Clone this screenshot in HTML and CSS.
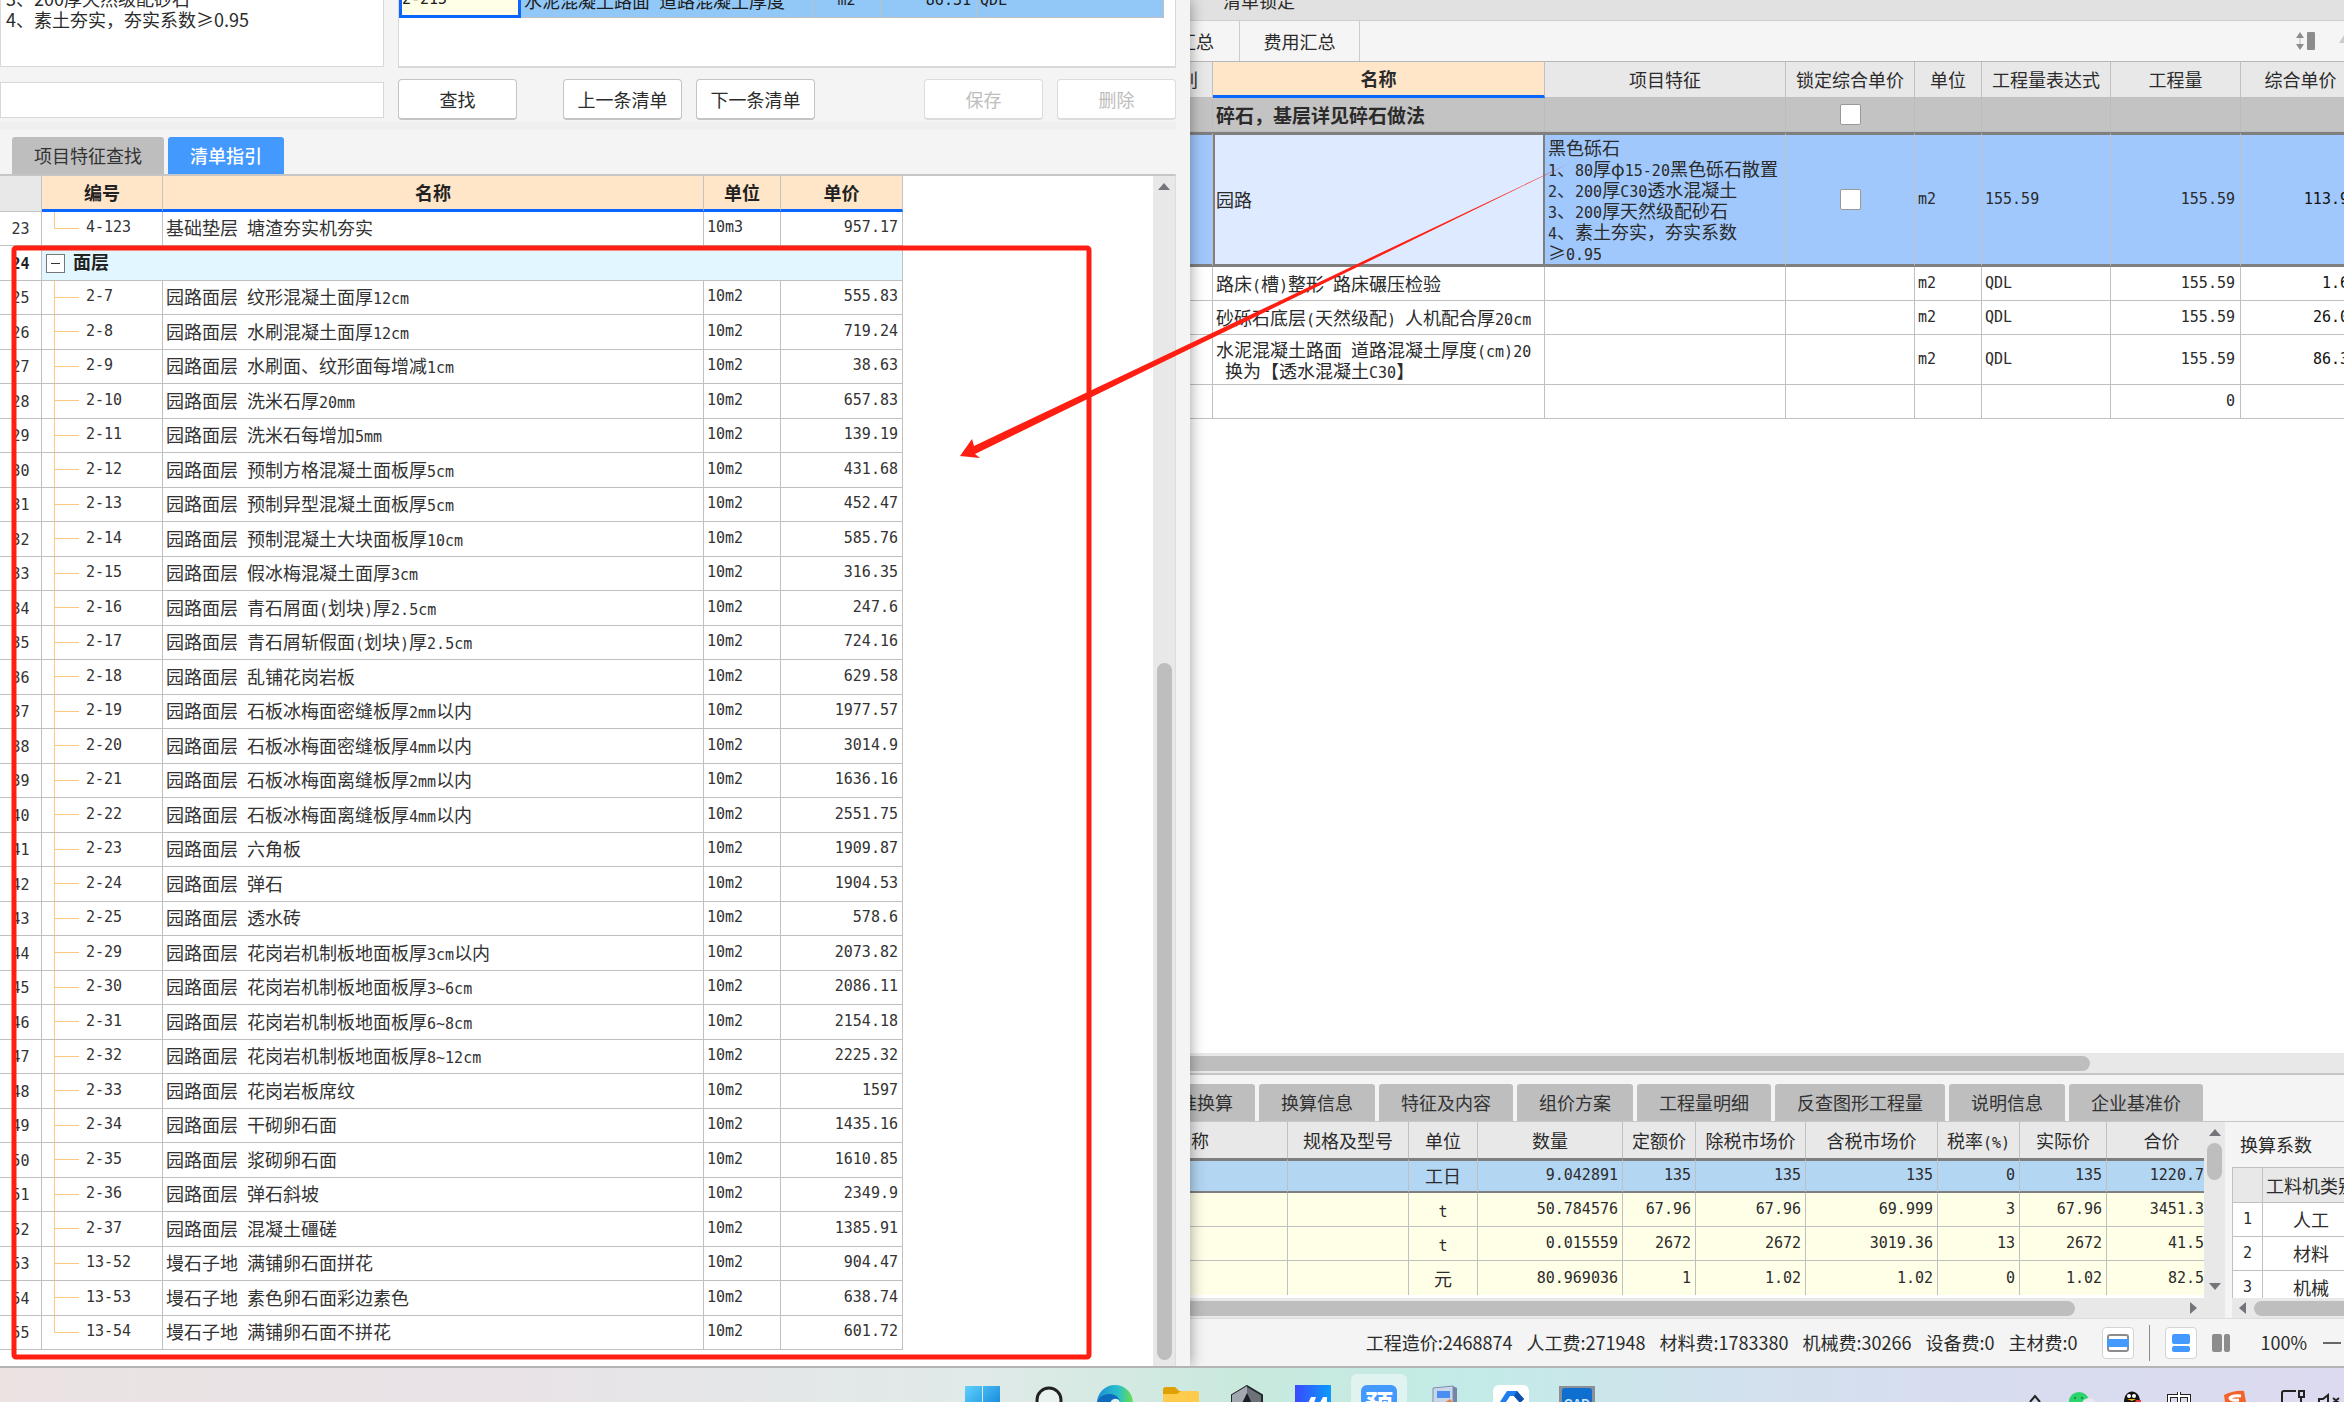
FILE: index.html
```html
<!DOCTYPE html>
<html lang="zh-CN">
<head>
<meta charset="utf-8">
<title>清单指引</title>
<link rel="stylesheet" href="styles.css">
</head>
<body>
<main class="desktop">
<section class="guide">
  <div class="guide-top">
    <textarea class="feature-box" aria-label="项目特征">3、200厚天然级配砂石
4、素土夯实，夯实系数≥0.95</textarea>
    <div class="quota-panel">
      <table class="quota">
        <colgroup><col class="w122"><col><col class="w68"><col class="w96"><col class="w187"></colgroup>
        <tr><td class="editing n">2-215</td><td>水泥混凝土路面<span class="n"> </span>道路混凝土厚度</td><td class="n mid">m2</td><td class="n num">86.31</td><td class="n">QDL</td></tr>
      </table>
    </div>
  </div>
  <div class="find-row">
    <input class="find-input" type="text" aria-label="查找内容">
    <button class="btn find">查找</button>
    <button class="btn">上一条清单</button>
    <button class="btn">下一条清单</button>
    <span class="grow"></span>
    <button class="btn" disabled>保存</button>
    <button class="btn" disabled>删除</button>
  </div>
  <div class="splitter"></div>
  <div class="tabs">
    <button class="tab">项目特征查找</button>
    <button class="tab active">清单指引</button>
  </div>
  <div class="list-area">
    <div class="list-scroll">
    <table class="list">
      <colgroup><col class="w42"><col class="w121"><col class="w541"><col class="w77"><col class="w122"></colgroup>
      <thead><tr><th class="corner"></th><th>编号</th><th>名称</th><th>单位</th><th>单价</th></tr></thead>
      <tbody>
      <tr><td>23</td><td class="last">4-123</td><td>基础垫层<span class="n"> </span>塘渣夯实机夯实</td><td>10m3</td><td>957.17</td></tr>
      <tr class="group"><td>24</td><td colspan="4"><button class="fold" aria-label="折叠"></button>面层</td></tr>
      <tr><td>25</td><td>2-7</td><td>园路面层<span class="n"> </span>纹形混凝土面厚<span class="n">12cm</span></td><td>10m2</td><td>555.83</td></tr>
      <tr><td>26</td><td>2-8</td><td>园路面层<span class="n"> </span>水刷混凝土面厚<span class="n">12cm</span></td><td>10m2</td><td>719.24</td></tr>
      <tr><td>27</td><td>2-9</td><td>园路面层<span class="n"> </span>水刷面、纹形面每增减<span class="n">1cm</span></td><td>10m2</td><td>38.63</td></tr>
      <tr><td>28</td><td>2-10</td><td>园路面层<span class="n"> </span>洗米石厚<span class="n">20mm</span></td><td>10m2</td><td>657.83</td></tr>
      <tr><td>29</td><td>2-11</td><td>园路面层<span class="n"> </span>洗米石每增加<span class="n">5mm</span></td><td>10m2</td><td>139.19</td></tr>
      <tr><td>30</td><td>2-12</td><td>园路面层<span class="n"> </span>预制方格混凝土面板厚<span class="n">5cm</span></td><td>10m2</td><td>431.68</td></tr>
      <tr><td>31</td><td>2-13</td><td>园路面层<span class="n"> </span>预制异型混凝土面板厚<span class="n">5cm</span></td><td>10m2</td><td>452.47</td></tr>
      <tr><td>32</td><td>2-14</td><td>园路面层<span class="n"> </span>预制混凝土大块面板厚<span class="n">10cm</span></td><td>10m2</td><td>585.76</td></tr>
      <tr><td>33</td><td>2-15</td><td>园路面层<span class="n"> </span>假冰梅混凝土面厚<span class="n">3cm</span></td><td>10m2</td><td>316.35</td></tr>
      <tr><td>34</td><td>2-16</td><td>园路面层<span class="n"> </span>青石屑面<span class="n">(</span>划块<span class="n">)</span>厚<span class="n">2.5cm</span></td><td>10m2</td><td>247.6</td></tr>
      <tr><td>35</td><td>2-17</td><td>园路面层<span class="n"> </span>青石屑斩假面<span class="n">(</span>划块<span class="n">)</span>厚<span class="n">2.5cm</span></td><td>10m2</td><td>724.16</td></tr>
      <tr><td>36</td><td>2-18</td><td>园路面层<span class="n"> </span>乱铺花岗岩板</td><td>10m2</td><td>629.58</td></tr>
      <tr><td>37</td><td>2-19</td><td>园路面层<span class="n"> </span>石板冰梅面密缝板厚<span class="n">2mm</span>以内</td><td>10m2</td><td>1977.57</td></tr>
      <tr><td>38</td><td>2-20</td><td>园路面层<span class="n"> </span>石板冰梅面密缝板厚<span class="n">4mm</span>以内</td><td>10m2</td><td>3014.9</td></tr>
      <tr><td>39</td><td>2-21</td><td>园路面层<span class="n"> </span>石板冰梅面离缝板厚<span class="n">2mm</span>以内</td><td>10m2</td><td>1636.16</td></tr>
      <tr><td>40</td><td>2-22</td><td>园路面层<span class="n"> </span>石板冰梅面离缝板厚<span class="n">4mm</span>以内</td><td>10m2</td><td>2551.75</td></tr>
      <tr><td>41</td><td>2-23</td><td>园路面层<span class="n"> </span>六角板</td><td>10m2</td><td>1909.87</td></tr>
      <tr><td>42</td><td>2-24</td><td>园路面层<span class="n"> </span>弹石</td><td>10m2</td><td>1904.53</td></tr>
      <tr><td>43</td><td>2-25</td><td>园路面层<span class="n"> </span>透水砖</td><td>10m2</td><td>578.6</td></tr>
      <tr><td>44</td><td>2-29</td><td>园路面层<span class="n"> </span>花岗岩机制板地面板厚<span class="n">3cm</span>以内</td><td>10m2</td><td>2073.82</td></tr>
      <tr><td>45</td><td>2-30</td><td>园路面层<span class="n"> </span>花岗岩机制板地面板厚<span class="n">3~6cm</span></td><td>10m2</td><td>2086.11</td></tr>
      <tr><td>46</td><td>2-31</td><td>园路面层<span class="n"> </span>花岗岩机制板地面板厚<span class="n">6~8cm</span></td><td>10m2</td><td>2154.18</td></tr>
      <tr><td>47</td><td>2-32</td><td>园路面层<span class="n"> </span>花岗岩机制板地面板厚<span class="n">8~12cm</span></td><td>10m2</td><td>2225.32</td></tr>
      <tr><td>48</td><td>2-33</td><td>园路面层<span class="n"> </span>花岗岩板席纹</td><td>10m2</td><td>1597</td></tr>
      <tr><td>49</td><td>2-34</td><td>园路面层<span class="n"> </span>干砌卵石面</td><td>10m2</td><td>1435.16</td></tr>
      <tr><td>50</td><td>2-35</td><td>园路面层<span class="n"> </span>浆砌卵石面</td><td>10m2</td><td>1610.85</td></tr>
      <tr><td>51</td><td>2-36</td><td>园路面层<span class="n"> </span>弹石斜坡</td><td>10m2</td><td>2349.9</td></tr>
      <tr><td>52</td><td>2-37</td><td>园路面层<span class="n"> </span>混凝土礓磋</td><td>10m2</td><td>1385.91</td></tr>
      <tr><td>53</td><td>13-52</td><td>墁石子地<span class="n"> </span>满铺卵石面拼花</td><td>10m2</td><td>904.47</td></tr>
      <tr><td>54</td><td>13-53</td><td>墁石子地<span class="n"> </span>素色卵石面彩边素色</td><td>10m2</td><td>638.74</td></tr>
      <tr><td>55</td><td class="last">13-54</td><td>墁石子地<span class="n"> </span>满铺卵石面不拼花</td><td>10m2</td><td>601.72</td></tr>
      </tbody>
    </table>
    </div>
    <div class="vbar"><svg width="12" height="7" viewBox="0 0 12 7"><path d="M0 7L6 0l6 7z" fill="#74747a"/></svg><div class="vthumb"></div></div>
  </div>
</section>

<section class="project">
 <div class="project-body">
  <header class="ribbon">清单锁定</header>
  <nav class="pages">
    <button class="page first">汇总</button>
    <button class="page">费用汇总</button>
    <span class="grow"></span>
    <svg width="48" height="18" viewBox="0 0 48 18"><g fill="#8c8c8c"><path d="M0 6l4-6 4 6zM0 12h8l-4 6z"/><path d="M3 6h2v6H3z" opacity=".3"/><rect x="11" width="8" height="18" rx="1"/></g><path d="M43 11l5-8v8z" fill="#ccc"/></svg>
  </nav>
  <div class="bill-area">
    <table class="bill">
      <colgroup><col class="w43"><col class="w332"><col class="w241"><col class="w129"><col class="w67"><col class="w129"><col class="w130"><col class="w120"></colgroup>
      <thead><tr><th class="cut">别</th><th class="current">名称</th><th>项目特征</th><th>锁定综合单价</th><th>单位</th><th>工程量表达式</th><th>工程量</th><th>综合单价</th></tr></thead>
      <tbody>
      <tr class="section"><td></td><td>碎石，基层详见碎石做法</td><td></td><td class="mid"><input type="checkbox" aria-label="锁定综合单价"></td><td></td><td></td><td></td><td></td></tr>
      <tr class="selected"><td></td><td class="focus">园路</td><td>黑色砾石<br><span class="n">1</span>、<span class="n">80</span>厚φ<span class="n">15-20</span>黑色砾石散置<br><span class="n">2</span>、<span class="n">200</span>厚<span class="n">C30</span>透水混凝土<br><span class="n">3</span>、<span class="n">200</span>厚天然级配砂石<br><span class="n">4</span>、素土夯实，夯实系数<br>≥<span class="n">0.95</span></td><td class="mid"><input type="checkbox" aria-label="锁定综合单价"></td><td class="n">m2</td><td class="n">155.59</td><td class="n num">155.59</td><td class="n num">113.9</td></tr>
      <tr><td></td><td>路床<span class="n">(</span>槽<span class="n">)</span>整形<span class="n"> </span>路床碾压检验</td><td></td><td></td><td class="n">m2</td><td class="n">QDL</td><td class="n num">155.59</td><td class="n num">1.6</td></tr>
      <tr><td></td><td>砂砾石底层<span class="n">(</span>天然级配<span class="n">) </span>人机配合厚<span class="n">20cm</span></td><td></td><td></td><td class="n">m2</td><td class="n">QDL</td><td class="n num">155.59</td><td class="n num">26.0</td></tr>
      <tr class="two"><td></td><td>水泥混凝土路面<span class="n"> </span>道路混凝土厚度<span class="n">(cm)20</span><br><span class="n keep"> </span>换为【透水混凝土<span class="n">C30</span>】</td><td></td><td></td><td class="n">m2</td><td class="n">QDL</td><td class="n num">155.59</td><td class="n num">86.3</td></tr>
      <tr><td></td><td></td><td></td><td></td><td></td><td></td><td class="n num">0</td><td></td></tr>
      </tbody>
    </table>
  </div>
  <div class="hbar main"><div class="hthumb"></div></div>
  <div class="tabs lower">
    <button class="tab first">准换算</button>
    <button class="tab">换算信息</button>
    <button class="tab">特征及内容</button>
    <button class="tab">组价方案</button>
    <button class="tab">工程量明细</button>
    <button class="tab wide">反查图形工程量</button>
    <button class="tab">说明信息</button>
    <button class="tab">企业基准价</button>
  </div>
  <div class="detail">
    <div class="res-area">
      <div class="res-clip">
      <table class="res">
        <colgroup><col><col class="w121"><col class="w69"><col class="w145"><col class="w73"><col class="w110"><col class="w132"><col class="w82"><col class="w87"><col class="w97"></colgroup>
        <thead><tr><th class="cut">名称</th><th>规格及型号</th><th>单位</th><th>数量</th><th>定额价</th><th>除税市场价</th><th>含税市场价</th><th>税率<span class="n">(%)</span></th><th>实际价</th><th>合价</th></tr></thead>
        <tbody>
        <tr class="selected"><td></td><td></td><td>工日</td><td>9.042891</td><td>135</td><td>135</td><td>135</td><td>0</td><td>135</td><td>1220.7</td></tr>
        <tr><td></td><td></td><td><span class="n">t</span></td><td>50.784576</td><td>67.96</td><td>67.96</td><td>69.999</td><td>3</td><td>67.96</td><td>3451.3</td></tr>
        <tr><td></td><td></td><td><span class="n">t</span></td><td>0.015559</td><td>2672</td><td>2672</td><td>3019.36</td><td>13</td><td>2672</td><td>41.5</td></tr>
        <tr><td></td><td></td><td>元</td><td>80.969036</td><td>1</td><td>1.02</td><td>1.02</td><td>0</td><td>1.02</td><td>82.5</td></tr>
        </tbody>
      </table>
      </div>
      <div class="hbar"><div class="hthumb"></div><span class="grow"></span><svg width="7" height="12" viewBox="0 0 7 12"><path d="M0 0l7 6-7 6z" fill="#74747a"/></svg></div>
    </div>
    <div class="res-vbar">
      <svg width="12" height="7" viewBox="0 0 12 7"><path d="M0 7L6 0l6 7z" fill="#74747a"/></svg>
      <div class="vthumb"></div>
      <span class="grow"></span>
      <svg width="12" height="7" viewBox="0 0 12 7"><path d="M0 0h12L6 7z" fill="#74747a"/></svg>
    </div>
    <aside class="coef">
      <h2>换算系数</h2>
      <div class="coef-clip">
      <table>
        <colgroup><col class="w31"><col class="w97"></colgroup>
        <tr><th></th><th>工料机类别</th></tr>
        <tr><td class="n">1</td><td>人工</td></tr>
        <tr><td class="n">2</td><td>材料</td></tr>
        <tr><td class="n">3</td><td>机械</td></tr>
      </table>
      </div>
      <div class="hbar"><svg width="7" height="12" viewBox="0 0 7 12"><path d="M7 0L0 6l7 6z" fill="#74747a"/></svg><div class="hthumb"></div></div>
    </aside>
  </div>
  <footer class="status">
    <div class="costs"><span>工程造价:2468874</span><span>人工费:271948</span><span>材料费:1783380</span><span>机械费:30266</span><span>设备费:0</span><span>主材费:0</span></div>
    <button class="view a" aria-label="单行显示"><svg width="22" height="18" viewBox="0 0 22 18"><rect x="1" y="1" width="20" height="16" rx="2" fill="#fff" stroke="#8c8c8c" stroke-width="2"/><path d="M0 5h22v8H0z" fill="#4499ff"/></svg></button>
    <i class="sep"></i>
    <button class="view" aria-label="上下布局"><svg width="18" height="18" viewBox="0 0 18 18"><rect width="18" height="10" rx="2" fill="#4499ff"/><rect y="12" width="18" height="6" rx="2" fill="#4499ff"/></svg></button>
    <button class="view plain" aria-label="左右布局"><svg width="18" height="18" viewBox="0 0 18 18"><rect width="10" height="18" rx="2" fill="#8c8c8c"/><rect x="12" width="6" height="18" rx="2" fill="#8c8c8c"/></svg></button>
    <span class="zoom">100%</span>
    <button class="minus" aria-label="缩小"></button>
  </footer>
 </div>
</section>

<svg class="marks" width="1600" height="1366" viewBox="0 0 1600 1366">
  <rect x="14" y="248" width="1075" height="1109" rx="2" fill="none" stroke="#ff1e12" stroke-width="5"/>
  <path d="M960 456L972 439L974 446L1570 163L975 454L980 458z" fill="#ff1e12"/>
</svg>
</main>

<footer class="taskbar">
  <span class="lead"></span>
  <div class="apps">
    <button aria-label="开始"><svg width="36" height="36" viewBox="0 0 36 36"><defs><linearGradient id="win" x2="1" y2="1"><stop stop-color="#5fd0fb"/><stop offset="1" stop-color="#0078d4"/></linearGradient></defs><path d="M0 1h17v16H0zM18 1h17v16H18zM0 18h17v17H0zM18 18h17v17H18z" fill="url(#win)"/></svg></button>
    <button aria-label="搜索"><svg width="36" height="36" viewBox="0 0 36 36"><circle cx="18" cy="15" r="12" fill="#e8f2ef" stroke="#222" stroke-width="3"/><path d="M26 24l8 9" stroke="#222" stroke-width="3"/></svg></button>
    <button aria-label="浏览器"><svg width="36" height="36" viewBox="0 0 36 36"><defs><linearGradient id="edge"><stop stop-color="#1a8fd8"/><stop offset=".6" stop-color="#2bc0c8"/><stop offset="1" stop-color="#6be04a"/></linearGradient></defs><circle cx="18" cy="18" r="18" fill="url(#edge)"/><path d="M0 18C2 7 20 6 23 16c1 3-1 4-2 6-3 5-11 10-14 10C3 29 0 24 0 18z" fill="#0f6cbd"/><path d="M13 20c0-8 10-8 10-2 0 2-2 3-1 5H14z" fill="#dff3ef"/></svg></button>
    <button aria-label="文件夹"><svg width="36" height="36" viewBox="0 0 36 36"><path d="M0 14V5q0-3 3-3h9l4 4h18v8z" fill="#e0a000"/><path d="M0 9h14l4-3h16q2 0 2 2v26H0z" fill="#ffcb4d"/></svg></button>
    <button aria-label="造价云"><svg width="36" height="36" viewBox="0 0 36 36"><path d="M18 1l15 9v18l-15 8-15-8V10z" fill="#6d7178" stroke="#24272c" stroke-width="2"/><path d="M18 1v8L7 28l-4-2V10z" fill="#a3a8b0"/><path d="M18 8l9 19H9z" fill="#1c1e22"/></svg></button>
    <button aria-label="办公"><svg width="36" height="36" viewBox="0 0 36 36"><defs><linearGradient id="of" x2="1"><stop stop-color="#3b49ff"/><stop offset="1" stop-color="#0a9cff"/></linearGradient></defs><path d="M0 0h36v36H0z" fill="url(#of)"/><path d="M8 29l8-17h5l-6 17zM19 29l9-17h4v17h-5V21l-4 8z" fill="#fff"/></svg></button>
    <button class="open" aria-label="预算"><span class="yu">预</span></button>
    <button aria-label="计算器"><svg width="36" height="36" viewBox="0 0 36 36"><path d="M6 3l20-2v34H6z" fill="#c9d6e8" stroke="#7e8fb0"/><path d="M26 1l4 2v32h-4z" fill="#7584a8"/><path d="M10 6h13v7H10z" fill="#4b8df0"/><path d="M10 17h5v3h-5zM10 22h5v3h-5z" fill="#6d87b5"/><path d="M17 18l6-4 4 5-3 1v6h-4z" fill="#e8824a"/></svg></button>
    <button aria-label="云助手"><svg width="36" height="36" viewBox="0 0 36 36"><rect width="36" height="36" rx="6" fill="#fff"/><path d="M5 20L14 6h10l7 8-4 4-6-7h-4l-6 9 6 9-4 4z" fill="#1f7df0"/><path d="M24 6l7 8-4 4-6-7z" fill="#0f4fae"/></svg></button>
    <button aria-label="CAD"><svg width="36" height="36" viewBox="0 0 36 36"><path d="M0 1h36v35H0z" fill="#8b8f96"/><rect x="3" y="3" width="30" height="33" rx="3" fill="#0f6fd0"/><text x="18" y="23" text-anchor="middle" class="cad">CAD</text></svg></button>
  </div>
  <span class="gap"></span>
  <div class="tray">
    <svg width="26" height="34" viewBox="0 0 26 34"><path d="M8 34l5-6 5 6" fill="none" stroke="#222" stroke-width="2"/></svg>
    <svg width="68" height="34" viewBox="0 0 68 34"><ellipse cx="31" cy="33" rx="10" ry="9" fill="#2bd46c"/><circle cx="27" cy="30" r="1" fill="#174"/><circle cx="34" cy="30" r="1" fill="#174"/><ellipse cx="41" cy="36" rx="7" ry="6" fill="#e8e8ee"/></svg>
    <svg width="32" height="34" viewBox="0 0 32 34"><path d="M8 34c0-14 16-14 16 0z" fill="#111"/><circle cx="13" cy="28" r="2" fill="#fff"/><circle cx="18" cy="28" r="2" fill="#fff"/><path d="M11 31h9l-4 2z" fill="#f5b400"/><path d="M20 32h5v2h-6z" fill="#e33"/></svg>
    <svg width="62" height="34" viewBox="0 0 62 34"><path d="M21 34v-6h20v6M31 24v10" fill="none" stroke="#222" stroke-width="4"/><path d="M21 34v-6h20v6M31 24v10" fill="none" stroke="#fff" stroke-width="2"/></svg>
    <svg width="50" height="34" viewBox="0 0 50 34"><path d="M14 27q11-5 20-4l2 11H15z" fill="#f4622c"/><path d="M31 28q-9-1-11 2 1 3 9 2" fill="none" stroke="#fff" stroke-width="3"/></svg>
    <svg width="56" height="34" viewBox="0 0 56 34"><path d="M36 23H24q-2 0-2 2v9M39 23h5v6h-5zM41 29v5" fill="none" stroke="#222" stroke-width="2"/></svg>
    <svg width="28" height="34" viewBox="0 0 28 34"><path d="M3 34v-3h4l5-4v7M17 30l6 5M23 30l-6 5" fill="none" stroke="#222" stroke-width="2"/></svg>
  </div>
</footer>
</body>
</html>
```
FILE: styles.css
```css
* { box-sizing: border-box; }
html, body { margin: 0; height: 100%; }
body {
  display: flex;
  flex-direction: column;
  height: 100vh;
  overflow: hidden;
  font: 18px/21px "Noto Sans CJK SC", sans-serif;
  color: #2b2b2b;
}
button, input, textarea { font: inherit; color: inherit; margin: 0; padding: 0; border: 0; }
table { border-collapse: separate; border-spacing: 0; table-layout: fixed; }
td, th { padding: 0; font-weight: 400; white-space: nowrap; overflow: hidden; }
svg { display: block; flex: none; }
.n { font-family: "DejaVu Sans Mono", monospace; font-size: 15px; }
span.n { line-height: 15px; }
.keep { white-space: pre; }
.grow { flex: 1; }
.mid { text-align: center; }
.num { text-align: right; }

.w31 { width: 31px; } .w42 { width: 42px; } .w43 { width: 43px; } .w67 { width: 67px; }
.w68 { width: 68px; } .w69 { width: 69px; } .w73 { width: 73px; } .w77 { width: 77px; }
.w82 { width: 82px; } .w87 { width: 87px; } .w96 { width: 96px; } .w97 { width: 97px; }
.w110 { width: 110px; } .w120 { width: 120px; } .w121 { width: 121px; } .w122 { width: 122px; }
.w129 { width: 129px; } .w130 { width: 130px; } .w132 { width: 132px; } .w145 { width: 145px; }
.w187 { width: 187px; } .w241 { width: 241px; } .w332 { width: 332px; } .w541 { width: 541px; }

.desktop {
  position: relative;
  flex: 1;
  min-height: 0;
  display: grid;
  grid-template-columns: 595fr 577fr;
  border-bottom: 2px solid #b2b4b6;
  overflow: hidden;
}
.marks { position: absolute; left: 0; top: 0; z-index: 3; pointer-events: none; }

/* guide window */
.guide {
  position: relative;
  z-index: 2;
  min-width: 0;
  min-height: 0;
  display: flex;
  flex-direction: column;
  padding-right: 14px;
  background: #f4f4f4;
  box-shadow: 0 0 14px rgba(0, 0, 0, .4);
}
.guide-top { display: flex; gap: 14px; height: 68px; overflow: hidden; }
.feature-box {
  width: 384px;
  height: 80px;
  margin-top: -13px;
  padding-left: 5px;
  border: 1px solid #d8d8d8;
  resize: none;
  overflow: hidden;
  background: #fff;
}
.quota-panel { flex: 1; border: 1px solid #d8d8d8; border-width: 0 1px 2px; background: #fff; }
.quota { width: 765px; margin-top: -17px; }
.quota td { height: 35px; background: #92c8f8; border: 1px solid #c0c0c0; border-width: 0 1px 1px 0; padding: 0 3px; color: #1c1c1c; }
.quota .num { padding-right: 5px; }
.quota .editing { background: #ffffe8; border: 3px solid #0a66ff; border-top: 0; padding: 0; }

.find-row { display: flex; align-items: center; margin-top: 11px; height: 41px; gap: 14px; }
.find-input { width: 384px; height: 36px; background: #fff; border: 1px solid #d8d8d8; }
.btn { width: 119px; height: 41px; background: #fff; border: 1px solid #c4c4c4; border-bottom-width: 2px; border-radius: 4px; }
.btn.find { margin-right: 32px; }
.btn:disabled { color: #bdbdbd; border-color: #dcdcdc; }
.splitter { height: 8px; margin-top: 2px; background: #efefef; }

.tabs { display: flex; gap: 4px; margin-top: 7px; padding-left: 12px; }
.tab { height: 37px; padding: 0 22px; background: #bebebe; border-radius: 3px 3px 0 0; color: #333; white-space: nowrap; }
.tab.active { background: #4499ff; color: #fff; font-weight: 500; }

.list-area { flex: 1; min-height: 0; display: flex; border-top: 2px solid #c6c6c6; border-right: 1px solid #dcdcdc; background: #fff; }
.list-scroll { flex: 1; overflow: hidden; }
.list { width: 903px; color: #333; }
.list th { height: 36px; background: #ffe6c8; font-weight: 700; color: #222; border-right: 1px solid #c4c4c4; border-bottom: 3px solid #0a66ff; }
.list .corner { background: #e8e8e8; border-bottom: 1px solid #c4c4c4; }
.list td { height: 34px; border: 1px solid #c0c0c0; border-width: 0 1px 1px 0; padding: 0 3px 2px; }
.list tr:nth-child(even) td { height: 35px; }
.list td:first-child { padding: 2px 0 0; text-align: center; }
.list td:not(:nth-child(3)) { font-family: "DejaVu Sans Mono", monospace; font-size: 15px; }
.list td:last-child { text-align: right; padding-right: 4px; }
.list td:nth-child(2) {
  padding-left: 44px;
  background: linear-gradient(#ffc880, #ffc880) 12px 0 / 1px 100% no-repeat,
              linear-gradient(#ffc880, #ffc880) 12px 16px / 25px 1px no-repeat;
}
.list td.last { background-size: 1px 16px, 25px 1px; }
.list .group td { font-weight: 700; color: #222; }
.list .group td:nth-child(2) { padding: 0 4px 2px; text-align: left; font: 700 18px/21px "Noto Sans CJK SC", sans-serif; background: #e1f6fe; }
.fold { width: 19px; height: 19px; margin-right: 8px; vertical-align: -3px; border: 1px solid #777; background: linear-gradient(#333, #333) center / 9px 1px no-repeat #fff; }

.vbar { width: 22px; background: #e8e8e8; display: flex; flex-direction: column; align-items: center; padding: 7px 0 6px; }
.vthumb { width: 15px; border-radius: 8px; background: #bebebe; }
.vbar .vthumb { flex: 1; margin-top: 473px; }

/* project window */
.project { min-width: 0; min-height: 0; overflow: hidden; background: #f4f4f4; display: flex; }
.project-body { flex: 1; min-width: 0; margin-left: -20px; display: flex; flex-direction: column; }
.ribbon { height: 21px; padding-left: 53px; line-height: 0; background: #e1e1e1; border-bottom: 1px solid #d0d0d0; }
.pages { display: flex; align-items: center; height: 40px; background: #f5f5f5; }
.page { height: 40px; width: 120px; background: none; border-right: 1px solid #ccc; }
.page.first { width: 70px; padding-right: 25px; text-align: right; }
.bill-area { flex: 1; min-height: 0; overflow: hidden; background: #fff; border-top: 1px solid #b8b8b8; }
.bill { width: 1191px; }
.bill th { height: 36px; background: #e8e8e8; border: 1px solid #c0c0c0; border-width: 0 1px 1px 0; }
.bill .cut { text-align: right; padding-right: 14px; }
.bill .current { background: #ffe6c8; font-weight: 700; border-bottom: 3px solid #0a66ff; }
.bill td { height: 34px; padding: 0 3px; border: 1px solid #c0c0c0; border-width: 0 1px 1px 0; }
.bill .num { padding-right: 5px; }
.bill .num:last-child { padding-right: 11px; color: #111; }
.bill .section td { height: 34px; background: #c3c3c3; font-size: 19px; font-weight: 700; border-color: #bcbcbc; }
.bill .selected td { height: 135px; background: #a0c8fc; border-top: 3px solid #7f7f7f; border-bottom: 3px solid #7f7f7f; }
.bill .selected td.focus { background: #deeaff; border-right: 2px solid #7f7f7f; border-left: 2px solid #7f7f7f; padding-left: 1px; }
.bill .two td { height: 50px; }
input[type=checkbox] { appearance: none; display: block; width: 21px; height: 21px; margin: 0 auto; background: #fff; border: 1px solid #999; border-radius: 2px; }

.hbar { height: 20px; background: #e8e8e8; display: flex; align-items: center; }
.hthumb { height: 15px; border-radius: 8px; background: #bebebe; }
.hbar.main { height: 22px; border-bottom: 2px solid #c6c6c6; }
.hbar.main .hthumb { width: 920px; }
.tabs.lower { padding: 0; margin-top: 9px; height: 38px; border-bottom: 1px solid #c6c6c6; }
.tabs.lower .tab.first { width: 85px; padding: 0 22px 0 9px; }

.detail { display: flex; height: 197px; border-bottom: 1px solid #ddd; }
.res-area { flex: 1; min-width: 0; display: flex; flex-direction: column; }
.res-clip { flex: 1; min-height: 0; overflow: hidden; background: #fff; }
.res { width: 100%; }
.res th { height: 36px; background: #e8e8e8; border-right: 1px solid #c0c0c0; }
.res .cut { text-align: right; padding-right: 78px; }
.res td { height: 34px; padding: 0 4px; background: #ffffe8; border: 1px solid #c0c0c0; border-width: 0 1px 1px 0; text-align: right; font-family: "DejaVu Sans Mono", monospace; font-size: 15px; }
.res td:nth-child(3) { text-align: center; font-family: "Noto Sans CJK SC", sans-serif; font-size: 18px; }
.res td:last-child { padding-right: 0; border-right: 0; }
.res th:last-child { border-right: 0; padding-left: 12px; }
.res .selected td { height: 35px; padding-bottom: 2px; background: #b3d6f3; border-top: 3px solid #7f7f7f; border-bottom: 2px solid #7f7f7f; }
.res tbody tr:last-child td { border-bottom: 0; }
.res-area .hthumb { width: 905px; }
.res-area .hbar { padding-right: 7px; }
.res-vbar { width: 21px; padding: 7px 0 28px; background: #e8e8e8; display: flex; flex-direction: column; align-items: center; }
.res-vbar .vthumb { height: 37px; margin-top: 7px; }
.coef { width: 119px; padding-left: 7px; display: flex; flex-direction: column; overflow: hidden; }
.coef h2 { margin: 0; height: 45px; padding: 12px 0 0 8px; font: 400 18px/21px "Noto Sans CJK SC", sans-serif; }
.coef-clip { flex: 1; min-height: 0; overflow: hidden; background: #fff; border-top: 1px solid #c0c0c0; }
.coef table { width: 128px; }
.coef th { height: 35px; background: #e8e8e8; }
.coef td { height: 34px; text-align: center; }
.coef th, .coef td { border: 1px solid #c0c0c0; border-width: 0 1px 1px 0; }
.coef td:first-child, .coef th:first-child { border-left-width: 1px; }
.coef .hbar { padding-left: 7px; gap: 8px; }
.coef .hthumb { flex: 1; border-radius: 8px 0 0 8px; }

.status { display: flex; align-items: center; justify-content: flex-end; gap: 12px; height: 47px; white-space: nowrap; padding-right: 3px; }
.costs { display: flex; gap: 14px; }
.view { width: 32px; height: 32px; display: grid; place-items: center; background: #fff; border: 1px solid #d4d4d4; border-radius: 4px; }
.view.a { margin-left: 13px; }
.view.plain { width: 20px; background: none; border: 0; margin-left: 2px; }
.sep { width: 1px; height: 36px; margin: 0 3px; background: #8c8c8c; }
.zoom { margin-left: 17px; }
.minus { width: 18px; height: 2px; margin-left: 4px; background: #666; }

/* taskbar */
.taskbar {
  display: flex;
  height: 34px;
  overflow: hidden;
  background: linear-gradient(90deg, #ebe3e2, #e9e3e8 22%, #e0eae8 42%, #c9e9dd 53%, #c3ebe7 63%, #d3e0ee 75%, #d8dcef 86%, #dcdaf0);
}
.lead { flex: 950; }
.gap { flex: 412; }
.apps { display: flex; }
.apps button { width: 66px; height: 58px; flex: none; padding: 17px 0 0; background: none; display: flex; justify-content: center; align-items: flex-start; }
.apps .open { width: 56px; height: 56px; margin: 6px 5px 0; padding-top: 11px; background: rgba(255, 255, 255, .45); border-radius: 6px; }
.yu { width: 36px; height: 36px; border-radius: 6px; background: #4499ff; color: #fff; font: 700 28px/36px "Noto Sans CJK SC", sans-serif; }
.cad { font: 700 12px "Liberation Sans", sans-serif; fill: #cfe6ff; }
.tray { display: flex; flex: none; }
```
